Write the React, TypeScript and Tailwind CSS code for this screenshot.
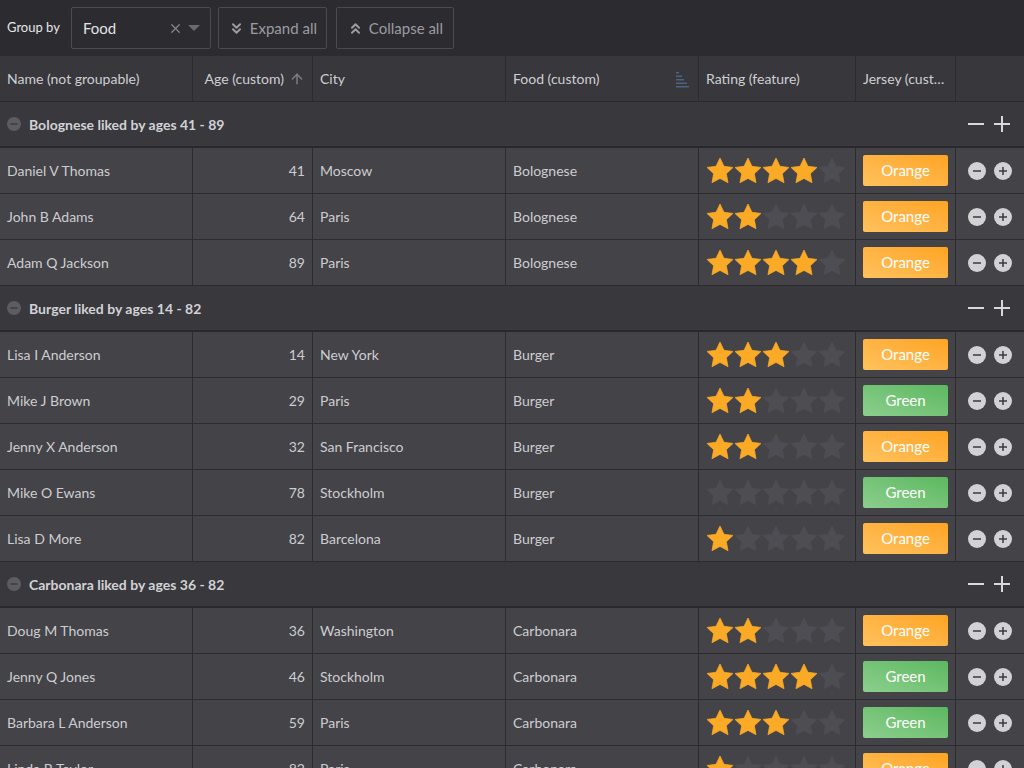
import React from 'react';
import { ChevronsDown, ChevronsUp, ArrowUp, X } from 'lucide-react';

type Row = { name: string; age: number; city: string; food: string; rating: number; jersey: 'Orange' | 'Green' };

const groups: { title: string; rows: Row[] }[] = [
  {
    title: 'Bolognese liked by ages 41 - 89',
    rows: [
      { name: 'Daniel V Thomas', age: 41, city: 'Moscow', food: 'Bolognese', rating: 4, jersey: 'Orange' },
      { name: 'John B Adams', age: 64, city: 'Paris', food: 'Bolognese', rating: 2, jersey: 'Orange' },
      { name: 'Adam Q Jackson', age: 89, city: 'Paris', food: 'Bolognese', rating: 4, jersey: 'Orange' },
    ],
  },
  {
    title: 'Burger liked by ages 14 - 82',
    rows: [
      { name: 'Lisa I Anderson', age: 14, city: 'New York', food: 'Burger', rating: 3, jersey: 'Orange' },
      { name: 'Mike J Brown', age: 29, city: 'Paris', food: 'Burger', rating: 2, jersey: 'Green' },
      { name: 'Jenny X Anderson', age: 32, city: 'San Francisco', food: 'Burger', rating: 2, jersey: 'Orange' },
      { name: 'Mike O Ewans', age: 78, city: 'Stockholm', food: 'Burger', rating: 0, jersey: 'Green' },
      { name: 'Lisa D More', age: 82, city: 'Barcelona', food: 'Burger', rating: 1, jersey: 'Orange' },
    ],
  },
  {
    title: 'Carbonara liked by ages 36 - 82',
    rows: [
      { name: 'Doug M Thomas', age: 36, city: 'Washington', food: 'Carbonara', rating: 2, jersey: 'Orange' },
      { name: 'Jenny Q Jones', age: 46, city: 'Stockholm', food: 'Carbonara', rating: 4, jersey: 'Green' },
      { name: 'Barbara L Anderson', age: 59, city: 'Paris', food: 'Carbonara', rating: 3, jersey: 'Green' },
      { name: 'Linda B Taylor', age: 82, city: 'Paris', food: 'Carbonara', rating: 1, jersey: 'Orange' },
    ],
  },
];

const Star: React.FC<{ on: boolean }> = ({ on }) => (
  <svg width="28" height="28" viewBox="1 1 22 22">
    <path
      d="M12 1.8l3.1 6.5 7.1.9-5.2 4.9 1.3 7.1L12 17.8l-6.3 3.4L7 14.1 1.8 9.2l7.1-.9L12 1.8z"
      fill={on ? '#fbaa26' : '#4d4d53'}
      stroke={on ? '#fbaa26' : '#4d4d53'}
      strokeWidth="0.6"
      strokeLinejoin="round"
    />
  </svg>
);

const CircleBtn: React.FC<{ plus?: boolean }> = ({ plus }) => (
  <svg width="18" height="18" viewBox="0 0 18 18">
    <circle cx="9" cy="9" r="9" fill="#d2d2d5" />
    <rect x="5" y="8.25" width="8" height="1.5" fill="#3a3a3f" />
    {plus && <rect x="8.25" y="5" width="1.5" height="8" fill="#3a3a3f" />}
  </svg>
);

const FilterIcon = () => (
  <svg width="16" height="18" viewBox="0 0 16 18">
    <rect x="1" y="2" width="3" height="1.5" fill="#4d6482" />
    <rect x="1" y="5.5" width="6" height="1.5" fill="#4d6482" />
    <rect x="1" y="9" width="8" height="1.5" fill="#4d6482" />
    <rect x="1" y="12.5" width="11" height="1.5" fill="#4d6482" />
    <rect x="1" y="16" width="13" height="1.5" fill="#4d6482" />
  </svg>
);

const cell = 'h-full flex items-center border-r border-[#2c2c30] px-[7px] shrink-0';

export default function App() {
  return (
    <div className="w-[1024px] h-[768px] overflow-hidden bg-[#2b2b30] text-[#d4d4d6]" style={{ fontFamily: 'Lato, "Open Sans", sans-serif' }}>
      {/* Toolbar */}
      <div className="h-[56px] flex items-center px-[7px] gap-[7px]">
        <span className="text-[13px] text-[#e6e6e8] mr-[4px]">Group by</span>
        <div className="w-[140px] h-[42px] border border-[#4a4a50] rounded-[2px] flex items-center pl-[11px] pr-[10px]">
          <span className="text-[15px] text-[#e2e2e4] flex-1">Food</span>
          <X size={15} strokeWidth={2} className="text-[#85858a] mr-[5px]" />
          <svg width="12" height="8" viewBox="0 0 12 8"><path d="M0 1h12L6 7z" fill="#6a6a70" /></svg>
        </div>
        <button className="h-[42px] w-[109px] border border-[#4a4a50] rounded-[2px] flex items-center justify-center gap-[5px] text-[15px] text-[#9c9ca2]">
          <ChevronsDown size={17} strokeWidth={2.75} />
          Expand all
        </button>
        <button className="h-[42px] w-[118px] border border-[#4a4a50] rounded-[2px] flex items-center justify-center gap-[5px] text-[15px] text-[#9c9ca2] ml-[2px]">
          <ChevronsUp size={17} strokeWidth={2.75} />
          Collapse all
        </button>
      </div>

      {/* Header */}
      <div className="h-[46px] flex bg-[#37373c] border-b border-[#2a2a2e] text-[14px] text-[#cfcfd2]">
        <div className={`${cell} w-[193px]`}>Name (not groupable)</div>
        <div className={`${cell} w-[120px] justify-end gap-[5px]`}>
          Age (custom)
          <ArrowUp size={16} strokeWidth={2.25} className="text-[#7c7c82]" />
        </div>
        <div className={`${cell} w-[193px]`}>City</div>
        <div className={`${cell} w-[193px] justify-between`}>
          Food (custom)
          <FilterIcon />
        </div>
        <div className={`${cell} w-[157px]`}>Rating (feature)</div>
        <div className={`${cell} w-[100px]`}>
          <span className="truncate">Jersey (custom)</span>
        </div>
        <div className="flex-1" />
      </div>

      {groups.map((g) => (
        <div key={g.title}>
          <div className="h-[46px] flex items-center bg-[#38383d] border-b-2 border-[#2a2a2e] pl-[7px] pr-[13px]">
            <svg width="14" height="14" viewBox="0 0 14 14" className="mr-[8px]">
              <circle cx="7" cy="7" r="7" fill="#5c5c61" />
              <rect x="3.5" y="6.3" width="7" height="1.4" fill="#3a3a3f" />
            </svg>
            <span className="text-[14px] font-bold text-[#d2d2d5] flex-1">{g.title}</span>
            <svg width="18" height="18" viewBox="0 0 18 18" className="mr-[8px]">
              <rect x="1" y="8" width="16" height="2" fill="#d8d8da" />
            </svg>
            <svg width="18" height="18" viewBox="0 0 18 18">
              <rect x="1" y="8" width="16" height="2" fill="#d8d8da" />
              <rect x="8" y="1" width="2" height="16" fill="#d8d8da" />
            </svg>
          </div>
          {g.rows.map((r) => (
            <div key={r.name} className="h-[46px] flex bg-[#434348] border-b border-[#2c2c30] text-[14px] text-[#cdcdd0]">
              <div className={`${cell} w-[193px]`}>{r.name}</div>
              <div className={`${cell} w-[120px] justify-end`}>{r.age}</div>
              <div className={`${cell} w-[193px]`}>{r.city}</div>
              <div className={`${cell} w-[193px]`}>{r.food}</div>
              <div className={`${cell} w-[157px]`}>
                {[1, 2, 3, 4, 5].map((i) => (
                  <Star key={i} on={i <= r.rating} />
                ))}
              </div>
              <div className={`${cell} w-[100px] justify-center`}>
                <div
                  className={`w-[85px] h-[31px] rounded-[2px] flex items-center justify-center text-white text-[15px] ${
                    r.jersey === 'Orange'
                      ? 'bg-gradient-to-tr from-[#ffc25c] to-[#ffa41f]'
                      : 'bg-gradient-to-tr from-[#8ccf8e] to-[#5cb85f]'
                  }`}
                >
                  {r.jersey}
                </div>
              </div>
              <div className="flex-1 flex items-center justify-center gap-[8px]">
                <CircleBtn />
                <CircleBtn plus />
              </div>
            </div>
          ))}
        </div>
      ))}
    </div>
  );
}
